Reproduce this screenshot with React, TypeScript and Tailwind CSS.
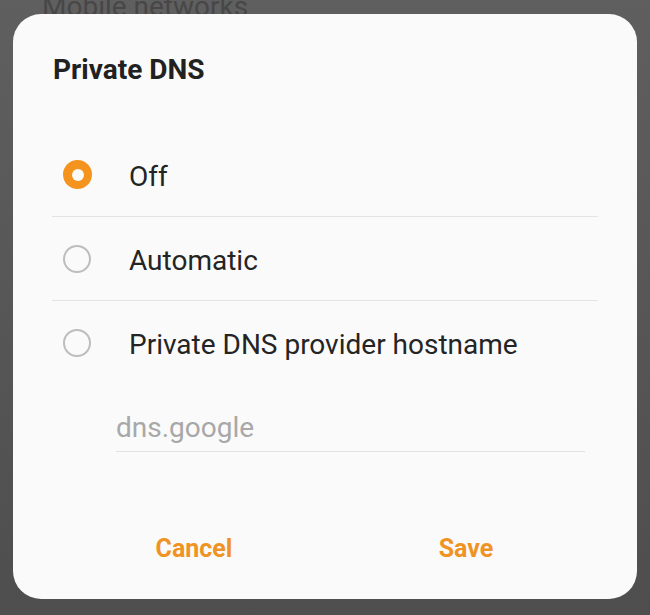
import React from "react";

function Radio({ checked }: { checked: boolean }) {
  if (checked) {
    return (
      <div className="w-[29px] h-[29px] rounded-full bg-[#f5931f] flex items-center justify-center shrink-0">
        <div className="w-[12px] h-[12px] rounded-full bg-[#fafafa]" />
      </div>
    );
  }
  return <div className="w-[28px] h-[28px] rounded-full border-2 border-[#bdbdbd] shrink-0" />;
}

function Row({ label, checked, divider }: { label: string; checked: boolean; divider: boolean }) {
  return (
    <div className={`h-[84px] flex items-center ${divider ? "border-b border-[#e4e4e4]" : ""}`}>
      <div className="w-[77px] pl-[11px] flex items-center">
        <Radio checked={checked} />
      </div>
      <span className="pt-[4px] text-[28px] leading-[32px] text-[#242424]">{label}</span>
    </div>
  );
}

export default function App() {
  return (
    <div className="relative w-[650px] h-[615px] overflow-hidden bg-gradient-to-b from-[#5f5f5f] to-[#4e4e4e] font-['Roboto',sans-serif]">
      <div className="mt-[-7px] pl-[42px] text-[28px] leading-[28px] text-[#474747] whitespace-nowrap">Mobile networks</div>

      <div className="absolute left-[13px] top-[14px] w-[624px] h-[585px] rounded-[28px] bg-[#fafafa] flex flex-col">
        <div className="pt-[40px] pl-[40px] text-[28px] leading-[32px] font-bold text-[#212121]">Private DNS</div>

        <div className="mt-[47px] mx-[39px]">
          <Row label="Off" checked divider />
          <Row label="Automatic" checked={false} divider />
          <Row label="Private DNS provider hostname" checked={false} divider={false} />
        </div>

        <div className="mt-[27px] ml-[103px] mr-[52px] border-b border-[#e2e2e2] pb-[7px]">
          <span className="text-[28px] leading-[32px] text-[#a8a8a8]">dns.google</span>
        </div>

        <div className="mt-[81px] ml-[45px] w-[544px] grid grid-cols-2">
          <div className="text-center text-[25px] leading-[32px] font-bold text-[#ef9424]">Cancel</div>
          <div className="text-center text-[25px] leading-[32px] font-bold text-[#ef9424]">Save</div>
        </div>
      </div>
    </div>
  );
}
